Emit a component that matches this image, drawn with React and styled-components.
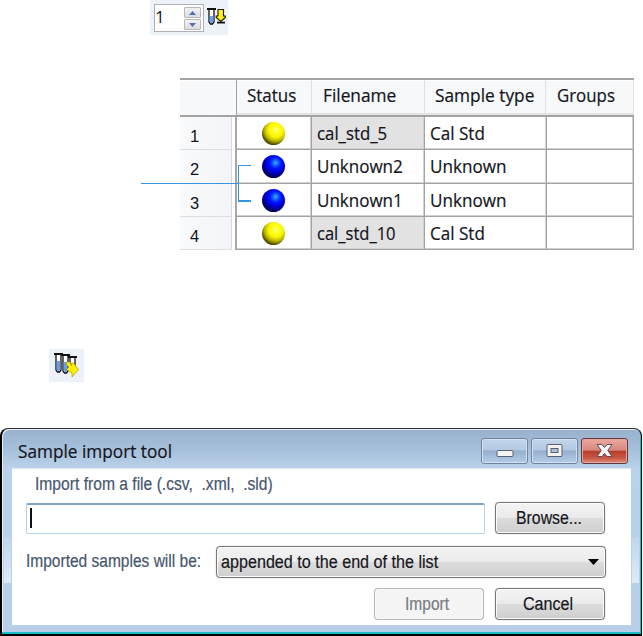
import React, { useLayoutEffect, useRef, useState } from 'react';
import styled, { createGlobalStyle } from 'styled-components';

const uiFont = '"Open Sans", "Noto Sans", sans-serif';
const formFont = '"Liberation Sans", Arial, sans-serif';

const GlobalStyle = createGlobalStyle`
  * {
    box-sizing: border-box;
  }

  body {
    margin: 0;
    background: #fff;
    overflow: hidden;
  }
`;

const Page = styled.main`
  width: 643px;
  height: 636px;
  display: flex;
  flex-direction: column;
  background: #fff;
  font-family: ${uiFont};
  color: #14141c;
`;

const TextBox = styled.span`
  display: block;
  flex: none;
  width: ${props => props.$width}px;
  white-space: pre;
`;

const TextInner = styled.span`
  display: inline-block;
  transform-origin: left center;
  -webkit-text-stroke: 0.2px currentColor;
`;

const SpinnerBar = styled.div`
  flex: none;
  width: 78px;
  height: 35px;
  margin-left: 150px;
  padding: 4px 2px 3px 4px;
  display: flex;
  gap: 3px;
  background: #edf1f8;
`;

const Spinner = styled.div`
  flex: none;
  width: 50px;
  height: 28px;
  display: flex;
  justify-content: space-between;
  border: 1px solid #adb0b6;
  background: #fff;
  font-size: 17px;
  line-height: 22px;
  padding: 1px 2px 1px 0;
`;

const SpinButtons = styled.div`
  width: 17px;
  display: flex;
  flex-direction: column;
  gap: 1px;
  padding-top: 1px;
`;

const SpinButton = styled.button`
  width: 17px;
  height: 11px;
  padding: 0;
  display: flex;
  align-items: center;
  justify-content: center;
  border: 1px solid #b8b8ba;
  border-radius: 1px;
  background: linear-gradient(#f2f2f2, #dcdcde);
`;

const TableWrap = styled.section`
  position: relative;
  flex: none;
  width: 454px;
  margin: 43px 0 0 180px;
`;

const Table = styled.div`
  border-top: 2px solid #a3a3a3;
`;

const HeaderRow = styled.div`
  display: grid;
  grid-template-columns: 57px 75px 113px 121px 88px;
  height: 37px;
  background: #f6f8fa;
  border-bottom: 2px solid #a3a3a3;
`;

const HeaderCell = styled.div`
  padding-left: ${props => props.$pad}px;
  border-right: 1px solid #e0e1e4;
  border-bottom: 2px solid #e3e3e5;
  box-shadow: inset 0 1px #fff;
  font-size: 18px;
  line-height: 31px;

  &:first-child {
    border-bottom: 0;
    border-right: 1px solid #a3a3a3;
  }
`;

const Row = styled.div`
  display: grid;
  grid-template-columns: 55px 77px 113px 122px 87px;
  height: ${props => props.$height}px;
`;

const RowNumber = styled.div`
  margin-right: 3px;
  padding: 7px 0 0 10px;
  border-right: 1px solid #d9dadd;
  border-bottom: 1px solid #dcdee1;
  background: linear-gradient(90deg, #f9fafb, #f2f4f7);
  font-family: ${formFont};
  font-size: 16.5px;
  line-height: 24px;
`;

const Cell = styled.div`
  padding-left: 5px;
  border-right: 1px solid #a3a3a3;
  border-bottom: 1px solid #a3a3a3;
  box-shadow: inset -1px -1px #d1d1d1;
  background: ${props => props.$shaded ? '#e2e2e2' : '#fff'};
  font-size: 18px;
  line-height: 32px;
`;

const StatusCell = styled(Cell)`
  display: flex;
  align-items: center;
  padding: 0 0 0 25px;
  border-left: 2px solid #a7a7a7;
`;

const Ball = styled.span`
  width: 23px;
  height: 23px;
  border-radius: 50%;
  background: ${props => props.$yellow
    ? 'radial-gradient(circle at 60% 34%, #ffff98 0, #ffff20 16%, #f8f400 36%, #b8b400 55%, #5c5900 70%, #2c2b00 84%)'
    : 'radial-gradient(circle at 59% 34%, #49a8ff 0, #166cff 12%, #0014ff 28%, #0000e2 44%, #00007c 64%, #000025 84%)'};
`;

const Bracket = styled.svg`
  position: absolute;
  left: -39px;
  top: 84px;
  overflow: visible;
`;

const ImportIcon = styled.div`
  flex: none;
  width: 35px;
  height: 33px;
  margin: 99px 0 0 49px;
  background: #edf1f8;
`;

const Dialog = styled.section`
  position: relative;
  flex: none;
  width: 642px;
  height: 208px;
  margin-top: 46px;
  padding: 1px 10px 9px;
  border: 2px solid #000;
  border-top: 1px solid #303030;
  border-right-width: 1px;
  border-bottom-width: 2px;
  border-radius: 8px 8px 0 0;
  background: linear-gradient(#98b1cd 0, #a5bed9 19px, #b9d1ea 39px, #b9cfe9 100%);
  box-shadow: inset -1px -2px #1dbbc9, inset 1px 1px #e9eff5;
`;

const SideShine = styled.span`
  position: absolute;
  top: 109px;
  ${props => props.$side}: 2px;
  width: 7px;
  height: 45px;
  background: linear-gradient(#c0d6ee, #dfeaf6);
`;

const TitleBar = styled.header`
  height: 38px;
  padding: 8px 3px 0 6px;
  display: flex;
  justify-content: space-between;
  font-size: 18px;
  line-height: 27px;
`;

const WindowButtons = styled.div`
  display: flex;
  gap: 3px;
`;

const WindowButton = styled.button`
  width: 47px;
  height: 26px;
  padding: 0;
  border: 1px solid ${props => props.$danger ? '#643642' : '#6f84a0'};
  border-radius: 3px;
  background: ${props => props.$danger
    ? 'linear-gradient(#eba9a0 0, #d9877d 47%, #b83c29 50%, #c95643 78%, #dc8c78 100%)'
    : 'linear-gradient(#c2d5eb 0, #b4cae2 46%, #94afce 49%, #b3cce7 100%)'};
  box-shadow: inset 0 0 0 1px ${props => props.$danger ? '#e3a79f' : '#d3e1f0'};
`;

const DialogBody = styled.div`
  width: 619px;
  height: 157px;
  padding-left: 14px;
  border-top: 1px solid #dfe7f0;
  background: #fff;
  font-family: ${formFont};
  font-size: 18px;
  color: #46566e;
`;

const FileLabel = styled.label`
  display: block;
  height: 34px;
  padding-left: 9px;
  line-height: 31px;
`;

const FileRow = styled.div`
  display: flex;
  gap: 10px;
  height: 43px;
`;

const FileInput = styled.div`
  width: 459px;
  height: 31px;
  padding: 3px 3px;
  border: 1px solid #b2d3eb;
  border-top: 2px solid #80a4c4;
  border-radius: 2px;
  background: #fff;
`;

const Caret = styled.span`
  display: block;
  width: 2px;
  height: 20px;
  background: #111;
`;

const Button = styled.button`
  width: 110px;
  height: 32px;
  margin-top: -1px;
  padding: 0 0 0 ${props => props.$pad}px;
  display: flex;
  align-items: center;
  border: 1px solid ${props => props.disabled ? '#b3b8bc' : '#777'};
  border-radius: 4px;
  background: ${props => props.disabled ? '#f4f4f4' : 'linear-gradient(#f3f3f3 0, #ebebeb 48%, #dcdcdc 51%, #cecece 100%)'};
  box-shadow: inset 0 0 0 1px #fafafa, 0 0 1px ${props => props.disabled ? '#c5c9cc' : '#777'};
  color: ${props => props.disabled ? '#777b82' : '#17171e'};
  font-family: ${formFont};
  font-size: 18px;
  text-align: left;
`;

const SelectRow = styled.div`
  display: flex;
  gap: 15px;
  height: 43px;
  line-height: 30px;
`;

const Select = styled(Button)`
  width: 390px;
  padding: 0 6px 0 4px;
  justify-content: space-between;
  margin-top: 0;
`;

const ButtonRow = styled.div`
  display: flex;
  gap: 11px;
  padding-left: 348px;
`;

const FitText = ({ width, children }) => {
  const ref = useRef(null);
  const [scale, setScale] = useState(1);

  useLayoutEffect(() => {
    setScale(width / ref.current.offsetWidth);
  }, [width, children]);

  return (
    <TextBox $width={width}>
      <TextInner ref={ref} style={{ transform: `scaleX(${scale})` }}>{children}</TextInner>
    </TextBox>
  );
};

const rows = [
  { file: 'cal_std_5', fileWidth: 70, type: 'Cal Std', yellow: true, height: 33 },
  { file: 'Unknown2', fileWidth: 86, type: 'Unknown', height: 34 },
  { file: 'Unknown1', fileWidth: 86, type: 'Unknown', height: 33 },
  { file: 'cal_std_10', fileWidth: 79, type: 'Cal Std', yellow: true, height: 33 },
];

const Tube = ({ x, y, height = 17 }) => (
  <g transform={`translate(${x} ${y})`}>
    <path d={`M2 1V${height - 2}L3.5 ${height}H5.5L7 ${height - 2}V1`} fill="#fff" stroke="#111" strokeWidth="1.3" />
    <path d={`M2.7 8V${height - 2}L4 ${height - 1}H5L6.3 ${height - 2}V8Z`} fill="#6c9ee8" />
    <path d="M0 1H9" stroke="#111" strokeWidth="2" />
  </g>
);

const App = () => (
  <>
    <GlobalStyle />
    <Page>
      <SpinnerBar>
        <Spinner>
          <span>1</span>
          <SpinButtons>
            <SpinButton aria-label="Increase">
              <svg width="7" height="4"><path d="M0 4L3.5 0L7 4Z" fill="#526db5" /></svg>
            </SpinButton>
            <SpinButton aria-label="Decrease">
              <svg width="7" height="4"><path d="M0 0H7L3.5 4Z" fill="#526db5" /></svg>
            </SpinButton>
          </SpinButtons>
        </Spinner>
        <svg width="19" height="24" viewBox="0 0 19 24">
          <Tube x={0} y={4} height={16} />
          <path d="M11 5.5H16.5V12H18.3V13.5L13.8 17.5L9.2 13.5V12H11Z" fill="#ffee20" stroke="#1c1b00" strokeWidth="1.1" />
          <path d="M10 18.6H18" stroke="#111" strokeWidth="1.8" />
        </svg>
      </SpinnerBar>

      <TableWrap>
        <Table>
          <HeaderRow>
            <HeaderCell />
            <HeaderCell $pad={10}><FitText width={49}>Status</FitText></HeaderCell>
            <HeaderCell $pad={11}><FitText width={73}>Filename</FitText></HeaderCell>
            <HeaderCell $pad={10}><FitText width={99}>Sample type</FitText></HeaderCell>
            <HeaderCell $pad={11}><FitText width={58}>Groups</FitText></HeaderCell>
          </HeaderRow>
          {rows.map((row, index) => (
            <Row key={row.file} $height={row.height}>
              <RowNumber>{index + 1}</RowNumber>
              <StatusCell><Ball $yellow={row.yellow} /></StatusCell>
              <Cell $shaded={row.yellow}><FitText width={row.fileWidth}>{row.file}</FitText></Cell>
              <Cell><FitText width={row.yellow ? 55 : 76}>{row.type}</FitText></Cell>
              <Cell />
            </Row>
          ))}
        </Table>
        <Bracket width="112" height="42">
          <path d="M0 21.5H97.5M110 3.5H97.5V39.5" fill="none" stroke="#3794df" />
          <path d="M97 39H110" stroke="#3794df" strokeWidth="2" />
        </Bracket>
      </TableWrap>

      <ImportIcon>
        <svg width="35" height="33" viewBox="0 0 35 33">
          <Tube x={5} y={4} height={19} />
          <Tube x={12} y={5} height={19} />
          <Tube x={19} y={7} height={15} />
          <path d="M17.5 13H21L22.5 17V14H24.5L29.5 20.5L23 28V24L17.5 20.5L20 18L17.5 16Z" fill="#ffee00" stroke="#989000" strokeWidth=".6" />
        </svg>
      </ImportIcon>

      <Dialog>
        <SideShine $side="left" />
        <SideShine $side="right" />
        <TitleBar>
          <FitText width={154}>Sample import tool</FitText>
          <WindowButtons>
            <WindowButton aria-label="Minimize">
              <svg width="45" height="24"><rect x="15" y="11.5" width="16" height="6" rx="1" fill="#f4f4f4" stroke="#5b6070" /></svg>
            </WindowButton>
            <WindowButton aria-label="Maximize">
              <svg width="45" height="24">
                <rect x="15" y="5.5" width="15" height="12" rx="1" fill="#f1f1f1" stroke="#5b6070" />
                <rect x="19" y="9.5" width="7" height="4" fill="#aac0d8" stroke="#5b6070" />
              </svg>
            </WindowButton>
            <WindowButton $danger aria-label="Close">
              <svg width="45" height="24">
                <path d="M15 5.5H20L22.5 8.5L25 5.5H30L25.8 11.5L30 17.5H25L22.5 14.5L20 17.5H15L19.2 11.5Z" fill="#f5f5f5" stroke="#5d4c59" strokeLinejoin="round" />
              </svg>
            </WindowButton>
          </WindowButtons>
        </TitleBar>
        <DialogBody>
          <FileLabel><FitText width={238}>Import from a file (.csv,  .xml,  .sld)</FitText></FileLabel>
          <FileRow>
            <FileInput><Caret /></FileInput>
            <Button $pad={20}><FitText width={66}>Browse...</FitText></Button>
          </FileRow>
          <SelectRow>
            <FitText width={175}>Imported samples will be:</FitText>
            <Select>
              <FitText width={217}>appended to the end of the list</FitText>
              <svg width="11" height="6"><path d="M0 0H11L5.5 6Z" fill="#000" /></svg>
            </Select>
          </SelectRow>
          <ButtonRow>
            <Button disabled $pad={30}><FitText width={44}>Import</FitText></Button>
            <Button $pad={27}><FitText width={50}>Cancel</FitText></Button>
          </ButtonRow>
        </DialogBody>
      </Dialog>
    </Page>
  </>
);

export default App;
